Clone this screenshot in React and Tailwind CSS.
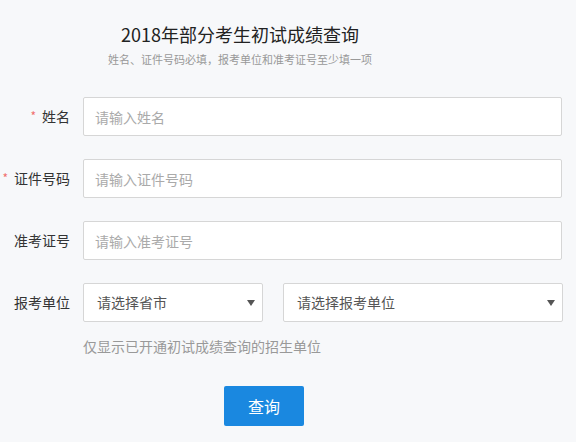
import React from "react";

const font = { fontFamily: '"Noto Sans CJK SC", "Liberation Sans", sans-serif' };

function Label({ required, children }) {
  return (
    <div className="w-[70px] mr-[13px] flex justify-end items-center text-[14px] text-[#333]">
      {required && <span className="text-[#f06f6f] text-[12px] mr-[6px] -mt-[2px]">*</span>}
      <span>{children}</span>
    </div>
  );
}

function TextRow({ label, required, placeholder }) {
  return (
    <div className="flex items-center h-[39px]">
      <Label required={required}>{label}</Label>
      <input
        type="text"
        placeholder={placeholder}
        className="w-[479px] h-[39px] px-[11px] bg-white border border-[#d6d6d6] rounded-[2px] text-[14px] text-[#333] placeholder-[#aaaaaa] outline-none"
      />
    </div>
  );
}

function Select({ width, text }) {
  return (
    <div
      className={`${width} h-[39px] bg-white border border-[#d6d6d6] rounded-[2px] flex items-center justify-between pl-[13px] pr-[7px] text-[14px] text-[#555]`}
    >
      <span>{text}</span>
      <svg width="8" height="6" viewBox="0 0 8 6">
        <path d="M0 0H8L4 6Z" fill="#555" />
      </svg>
    </div>
  );
}

export default function App() {
  return (
    <div className="w-[576px] h-[442px] bg-[#f7f8fa] overflow-hidden" style={font}>
      <div className="w-[480px] flex flex-col items-center pt-[21px]">
        <h1 className="text-[18px] leading-[26px] text-[#222]">2018年部分考生初试成绩查询</h1>
        <p className="text-[11px] leading-[16px] text-[#999] mt-[4px]">
          姓名、证件号码必填，报考单位和准考证号至少填一项
        </p>
      </div>

      <div className="flex flex-col gap-[23px] mt-[30px]">
        <TextRow label="姓名" required placeholder="请输入姓名" />
        <TextRow label="证件号码" required placeholder="请输入证件号码" />
        <TextRow label="准考证号" placeholder="请输入准考证号" />
        <div className="flex items-center h-[39px]">
          <Label>报考单位</Label>
          <div className="flex gap-[20px]">
            <Select width="w-[180px]" text="请选择省市" />
            <Select width="w-[280px]" text="请选择报考单位" />
          </div>
        </div>
      </div>

      <p className="ml-[83px] mt-[14px] text-[14px] leading-[20px] text-[#999]">
        仅显示已开通初试成绩查询的招生单位
      </p>

      <div className="ml-[224px] mt-[30px]">
        <button className="w-[80px] h-[40px] bg-[#1a88e0] rounded-[2px] text-white text-[16px]">
          查询
        </button>
      </div>
    </div>
  );
}
